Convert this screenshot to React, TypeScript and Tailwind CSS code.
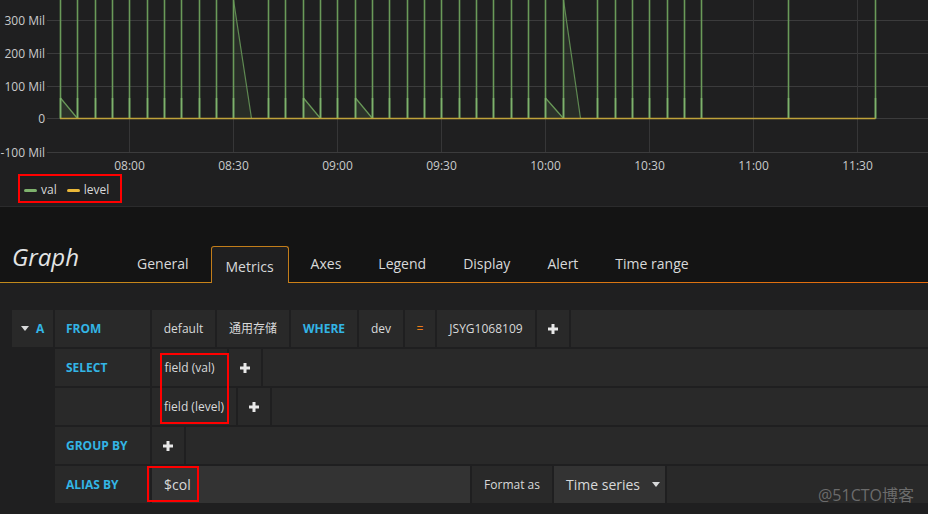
import React from "react";

const X0 = 60;
const STEP = 52 / 3;
const ZERO = 118.5;

const lineKs = [
  0, 1, 2, 3, 4, 5, 6, 7, 8, 9, 10, 12, 13, 14, 15, 16, 17, 18, 19, 20, 21, 22, 23, 24, 25, 26, 27, 28, 29,
  31, 32, 33, 34, 35, 36, 37, 42, 47,
];
const smallSlants = [0, 14, 17, 28];
const bigSlants = [10, 29];

const px = (k: number) => Math.round(X0 + STEP * k) + 0.5;

function Chart() {
  const yTicks = [
    { y: 20.5, l: "300 Mil" },
    { y: 53.5, l: "200 Mil" },
    { y: 86.5, l: "100 Mil" },
    { y: 118.5, l: "0" },
    { y: 152.5, l: "-100 Mil" },
  ];
  const xTicks = ["08:00", "08:30", "09:00", "09:30", "10:00", "10:30", "11:00", "11:30"];
  return (
    <svg width={928} height={178} className="block">
      {yTicks.map((t) => (
        <g key={t.l}>
          <line x1={47} x2={928} y1={t.y} y2={t.y} stroke="#3b3b3c" strokeWidth={1} />
          <text
            x={45}
            y={t.y}
            textAnchor="end"
            dominantBaseline="central"
            fontFamily="'Open Sans', sans-serif"
            fontSize={12}
            fill="#c9cacb"
          >
            {t.l}
          </text>
        </g>
      ))}
      {xTicks.map((t, i) => {
        const x = Math.round(X0 + STEP * 4 + 104 * i) + 0.5;
        return (
          <g key={t}>
            <line x1={x} x2={x} y1={0} y2={152} stroke="#363637" strokeWidth={1} />
            <text
              x={x}
              y={165}
              textAnchor="middle"
              dominantBaseline="central"
              fontFamily="'Open Sans', sans-serif"
              fontSize={12}
              fill="#c9cacb"
            >
              {t}
            </text>
          </g>
        );
      })}
      {smallSlants.map((k) => {
        const x = px(k);
        const x2 = px(k + 1);
        return (
          <g key={"s" + k}>
            <polygon points={`${x},98 ${x2},${ZERO} ${x},${ZERO}`} fill="#7eb26d" fillOpacity={0.14} />
            <line x1={x} y1={98} x2={x2} y2={ZERO} stroke="#6a9a59" strokeWidth={1.2} />
          </g>
        );
      })}
      {bigSlants.map((k) => {
        const x = px(k);
        const x2 = px(k + 1);
        return (
          <g key={"b" + k}>
            <polygon points={`${x},0 ${x2},${ZERO} ${x},${ZERO}`} fill="#7eb26d" fillOpacity={0.1} />
            <line x1={x} y1={0} x2={x2} y2={ZERO} stroke="#5f8a52" strokeWidth={1.2} />
          </g>
        );
      })}
      {lineKs.map((k) => {
        const x = px(k);
        return (
          <g key={"l" + k}>
            <line x1={x} x2={x} y1={0} y2={ZERO} stroke="#6a9a59" strokeWidth={1.6} />
            <line x1={x} x2={x} y1={98} y2={ZERO} stroke="#7eb26d" strokeWidth={1.6} />
          </g>
        );
      })}
      <line x1={X0} x2={px(47)} y1={ZERO} y2={ZERO} stroke="#bfa23a" strokeWidth={1.6} />
    </svg>
  );
}

function Plus() {
  return (
    <svg width="10" height="10" viewBox="0 0 10 10">
      <rect x="3.5" y="0" width="3" height="10" fill="#e8e8e8" />
      <rect x="0" y="3.5" width="10" height="3" fill="#e8e8e8" />
    </svg>
  );
}

const base = "flex items-center justify-center h-[37px] bg-[#292929] text-[12px] shrink-0";
const cell = `${base} text-[#d8d9da]`;
const label =
  "flex items-center h-[37px] w-[95px] bg-[#292929] pl-[11px] text-[12px] font-bold text-[#33b5e5] shrink-0";
const filler = "flex-1 h-[37px] bg-[#292929]";

export default function App() {
  return (
    <div className="relative w-[928px] h-[514px] overflow-hidden bg-[#1f1f20] font-['Open_Sans','Noto_Sans_CJK_SC',sans-serif]">
      {/* chart panel */}
      <div className="h-[206px] bg-[#1f1f20]">
        <Chart />
        <div className="flex items-center h-[24px] pl-[24px] text-[12px] text-[#d8d9da]">
          <div className="flex items-center">
            <div className="w-[13px] h-[3px] rounded-sm bg-[#7eb26d]" />
            <span className="ml-[4px]">val</span>
          </div>
          <div className="flex items-center ml-[10px]">
            <div className="w-[13px] h-[3px] rounded-sm bg-[#eab839]" />
            <span className="ml-[4px]">level</span>
          </div>
        </div>
      </div>
      <div className="h-px bg-[#2b2b2c]" />
      {/* header with tabs */}
      <div className="bg-[#141414]">
        <div className="flex items-end h-[75px] pl-[12px]">
          <div className="w-[110px] text-[24px] italic leading-[32px] mb-[9px] text-[#e3e4e5]">Graph</div>
          <div className="flex items-end gap-[7px] text-[14px] text-[#d8d9da]">
            <div className="h-[37px] px-[15px] flex items-center">General</div>
            <div className="relative z-10 -mb-px h-[37px] px-[14px] pt-[3px] flex items-center bg-[#1f1f20] border border-b-0 border-[#c27d1a] rounded-t-[3px]">
              Metrics
            </div>
            <div className="h-[37px] px-[15px] flex items-center">Axes</div>
            <div className="h-[37px] px-[15px] flex items-center">Legend</div>
            <div className="h-[37px] px-[15px] flex items-center">Display</div>
            <div className="h-[37px] px-[15px] flex items-center">Alert</div>
            <div className="h-[37px] px-[15px] flex items-center">Time range</div>
          </div>
        </div>
        <div className="h-px bg-gradient-to-r from-[#c08a1c] to-[#e5690c]" />
      </div>
      {/* query editor */}
      <div className="flex flex-col gap-[2px] pt-[27px] pl-[12px]">
        <div className="flex gap-[2px]">
          <div className="flex items-center h-[37px] w-[41px] bg-[#292929] pl-[9px] shrink-0">
            <svg width="8" height="5" viewBox="0 0 8 5">
              <polygon points="0,0 8,0 4,5" fill="#d8d9da" />
            </svg>
            <span className="ml-[7px] text-[12px] font-bold text-[#33b5e5]">A</span>
          </div>
          <div className={label}>FROM</div>
          <div className={`${cell} w-[63px]`}>default</div>
          <div className={`${cell} w-[72px]`}>通用存储</div>
          <div className={`${base} w-[66px] font-bold text-[#33b5e5]`}>WHERE</div>
          <div className={`${cell} w-[44px]`}>dev</div>
          <div className={`${base} w-[30px] text-[#eb7b18]`}>=</div>
          <div className={`${cell} w-[98px]`}>JSYG1068109</div>
          <div className={`${cell} w-[32px]`}>
            <Plus />
          </div>
          <div className={filler} />
        </div>
        <div className="flex gap-[2px] pl-[43px]">
          <div className={label}>SELECT</div>
          <div className={`${cell} w-[75px]`}>field (val)</div>
          <div className={`${cell} w-[32px]`}>
            <Plus />
          </div>
          <div className={filler} />
        </div>
        <div className="flex gap-[2px] pl-[43px]">
          <div className={label}></div>
          <div className={`${cell} w-[84px]`}>field (level)</div>
          <div className={`${cell} w-[32px]`}>
            <Plus />
          </div>
          <div className={filler} />
        </div>
        <div className="flex gap-[2px] pl-[43px]">
          <div className={label}>GROUP BY</div>
          <div className={`${cell} w-[32px]`}>
            <Plus />
          </div>
          <div className={filler} />
        </div>
        <div className="flex gap-[2px] pl-[43px]">
          <div className={label}>ALIAS BY</div>
          <div className="flex items-center h-[37px] w-[318px] bg-[#333333] pl-[12px] text-[14px] text-[#d8d9da] shrink-0">
            $col
          </div>
          <div className={`${cell} w-[80px]`}>Format as</div>
          <div className="flex items-center h-[37px] w-[111px] bg-[#333333] pl-[12px] text-[14px] text-[#d8d9da] shrink-0">
            <span>Time series</span>
            <svg className="ml-[12px]" width="8" height="5" viewBox="0 0 8 5">
              <polygon points="0,0 8,0 4,5" fill="#d8d9da" />
            </svg>
          </div>
          <div className={filler} />
        </div>
      </div>
      {/* annotation boxes */}
      <div className="absolute left-[18px] top-[174px] w-[104px] h-[29px] border-2 border-[#ff0000]" />
      <div className="absolute left-[160px] top-[353px] w-[69px] h-[71px] border-2 border-[#ff0000]" />
      <div className="absolute left-[147px] top-[466px] w-[52px] h-[36px] border-2 border-[#ff0000]" />
      {/* watermark */}
      <div className="absolute left-[818px] top-[483px] text-[16px] text-[#8a8a8a]/70 whitespace-nowrap">@51CTO博客</div>
    </div>
  );
}
